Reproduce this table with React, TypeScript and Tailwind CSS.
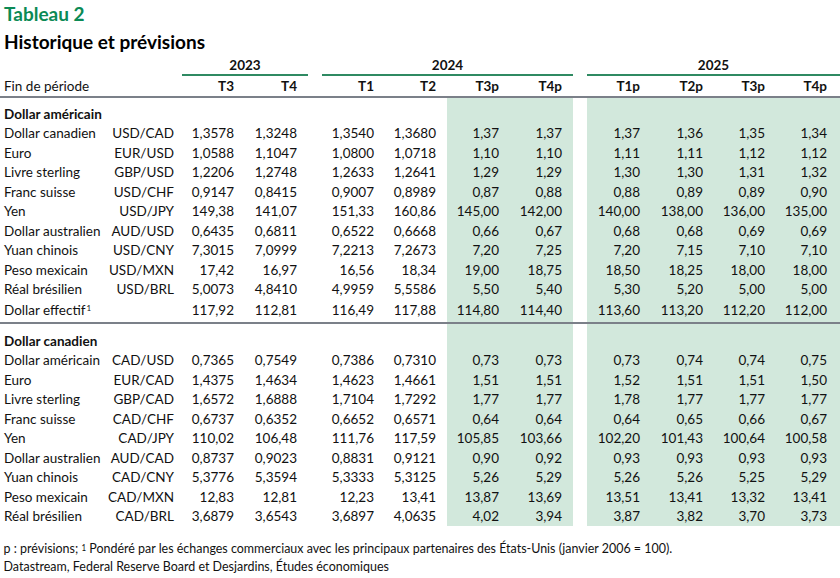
import React from "react";

type Col = { w: string; pr: string; green: boolean };

const COLS: Col[] = [
  { w: "w-[66px]", pr: "pr-[4px]", green: false },
  { w: "w-[60px]", pr: "pr-[4px]", green: false },
  { w: "w-[63px]", pr: "pr-[4px]", green: false },
  { w: "w-[77px]", pr: "pr-[4px]", green: false },
  { w: "w-[69px]", pr: "pr-[11px]", green: false },
  { w: "w-[56px]", pr: "pr-[4px]", green: true },
  { w: "w-[70px]", pr: "pr-[11px]", green: true },
  { w: "w-[14px]", pr: "pr-0", green: false },
  { w: "w-[57px]", pr: "pr-[4px]", green: true },
  { w: "w-[63px]", pr: "pr-[4px]", green: true },
  { w: "w-[62px]", pr: "pr-[4px]", green: true },
  { w: "w-[71px]", pr: "pr-[13px]", green: true },
];

type RowData = [string, string, ...string[]];

const US: RowData[] = [
  ["Dollar canadien", "USD/CAD", "1,3578", "1,3248", "1,3540", "1,3680", "1,37", "1,37", "1,37", "1,36", "1,35", "1,34"],
  ["Euro", "EUR/USD", "1,0588", "1,1047", "1,0800", "1,0718", "1,10", "1,10", "1,11", "1,11", "1,12", "1,12"],
  ["Livre sterling", "GBP/USD", "1,2206", "1,2748", "1,2633", "1,2641", "1,29", "1,29", "1,30", "1,30", "1,31", "1,32"],
  ["Franc suisse", "USD/CHF", "0,9147", "0,8415", "0,9007", "0,8989", "0,87", "0,88", "0,88", "0,89", "0,89", "0,90"],
  ["Yen", "USD/JPY", "149,38", "141,07", "151,33", "160,86", "145,00", "142,00", "140,00", "138,00", "136,00", "135,00"],
  ["Dollar australien", "AUD/USD", "0,6435", "0,6811", "0,6522", "0,6668", "0,66", "0,67", "0,68", "0,68", "0,69", "0,69"],
  ["Yuan chinois", "USD/CNY", "7,3015", "7,0999", "7,2213", "7,2673", "7,20", "7,25", "7,20", "7,15", "7,10", "7,10"],
  ["Peso mexicain", "USD/MXN", "17,42", "16,97", "16,56", "18,34", "19,00", "18,75", "18,50", "18,25", "18,00", "18,00"],
  ["Réal brésilien", "USD/BRL", "5,0073", "4,8410", "4,9959", "5,5586", "5,50", "5,40", "5,30", "5,20", "5,00", "5,00"],
];

const EFF = ["117,92", "112,81", "116,49", "117,88", "114,80", "114,40", "113,60", "113,20", "112,20", "112,00"];

const CA: RowData[] = [
  ["Dollar américain", "CAD/USD", "0,7365", "0,7549", "0,7386", "0,7310", "0,73", "0,73", "0,73", "0,74", "0,74", "0,75"],
  ["Euro", "EUR/CAD", "1,4375", "1,4634", "1,4623", "1,4661", "1,51", "1,51", "1,52", "1,51", "1,51", "1,50"],
  ["Livre sterling", "GBP/CAD", "1,6572", "1,6888", "1,7104", "1,7292", "1,77", "1,77", "1,78", "1,77", "1,77", "1,77"],
  ["Franc suisse", "CAD/CHF", "0,6737", "0,6352", "0,6652", "0,6571", "0,64", "0,64", "0,64", "0,65", "0,66", "0,67"],
  ["Yen", "CAD/JPY", "110,02", "106,48", "111,76", "117,59", "105,85", "103,66", "102,20", "101,43", "100,64", "100,58"],
  ["Dollar australien", "AUD/CAD", "0,8737", "0,9023", "0,8831", "0,9121", "0,90", "0,92", "0,93", "0,93", "0,93", "0,93"],
  ["Yuan chinois", "CAD/CNY", "5,3776", "5,3594", "5,3333", "5,3125", "5,26", "5,29", "5,26", "5,26", "5,25", "5,29"],
  ["Peso mexicain", "CAD/MXN", "12,83", "12,81", "12,23", "13,41", "13,87", "13,69", "13,51", "13,41", "13,32", "13,41"],
  ["Réal brésilien", "CAD/BRL", "3,6879", "3,6543", "3,6897", "4,0635", "4,02", "3,94", "3,87", "3,82", "3,70", "3,73"],
];

function Row({
  h,
  label,
  cells,
  bold,
  cellsBold,
  green = true,
}: {
  h: string;
  label?: React.ReactNode;
  cells: string[];
  bold?: boolean;
  cellsBold?: boolean;
  green?: boolean;
}) {
  return (
    <div className={`flex items-center ${h}`}>
      <div className={`w-[112px] h-full flex items-center pl-[4px] whitespace-nowrap ${bold ? "font-bold" : ""}`}>
        {label}
      </div>
      {COLS.map((c, i) => {
        const dataIdx = i < 7 ? i : i === 7 ? -1 : i - 1;
        const txt = dataIdx >= 0 ? cells[dataIdx] ?? "" : "";
        return (
          <div
            key={i}
            className={`${c.w} ${c.pr} h-full flex items-center justify-end whitespace-nowrap ${
              cellsBold ? "font-bold" : ""
            } ${c.green && green ? "bg-[#d2e8dc]" : ""}`}
          >
            {txt}
          </div>
        );
      })}
    </div>
  );
}

export default function App() {
  return (
    <div className="w-[840px] h-[578px] bg-white text-[#111] font-['Lato',sans-serif] text-[13.5px] overflow-hidden">
      <div className="h-[28px] flex items-center pl-[4px] text-[19px] font-bold text-[#0b8a55]">Tableau 2</div>
      <div className="h-[28px] flex items-center pl-[4px] text-[19px] font-bold text-black">Historique et prévisions</div>

      {/* Years */}
      <div className="flex h-[20px] font-bold">
        <div className="ml-[182px] w-[126px] flex items-center justify-center border-b-2 border-[#2f8a62]">2023</div>
        <div className="ml-[14px] w-[251px] flex items-center justify-center border-b-2 border-[#2f8a62]">2024</div>
        <div className="ml-[14px] w-[253px] flex items-center justify-center border-b-2 border-[#2f8a62]">2025</div>
      </div>

      {/* Column headers */}
      <div className="border-b-2 border-[#7b8089]">
        <Row
          h="h-[20px]"
          label="Fin de période"
          cells={["", "T3", "T4", "T1", "T2", "T3p", "T4p", "T1p", "T2p", "T3p", "T4p"]}
          cellsBold
          green={false}
        />
      </div>

      <div>
        <Row h="h-[6px]" cells={[]} />
        <Row h="h-[19.5px]" label="Dollar américain" bold cells={[]} />
        {US.map((r) => (
          <Row key={r[0]} h="h-[19.5px]" label={r[0]} cells={r.slice(1)} />
        ))}
        <Row
          h="h-[23px]"
          label={
            <span>
              Dollar effectif<sup className="text-[8px] relative -top-[4px] ml-[1px]">1</sup>
            </span>
          }
          cells={["", ...EFF]}
        />
        <div className="h-[2px] bg-[#7b8089]" />
        <Row h="h-[7px]" cells={[]} />
        <Row h="h-[19.5px]" label="Dollar canadien" bold cells={[]} />
        {CA.map((r) => (
          <Row key={r[0]} h="h-[19.5px]" label={r[0]} cells={r.slice(1)} />
        ))}
      </div>

      <div className="mt-[13px] pl-[4px] text-[14px] leading-[18px] origin-left scale-x-[0.89] w-[900px]">
        <div className="whitespace-nowrap">
          p : prévisions; <sup className="text-[9px] relative -top-[2px]">1</sup> Pondéré par les échanges commerciaux avec les principaux partenaires des États-Unis (janvier 2006 = 100).
        </div>
        <div className="whitespace-nowrap">Datastream, Federal Reserve Board et Desjardins, Études économiques</div>
      </div>
    </div>
  );
}
